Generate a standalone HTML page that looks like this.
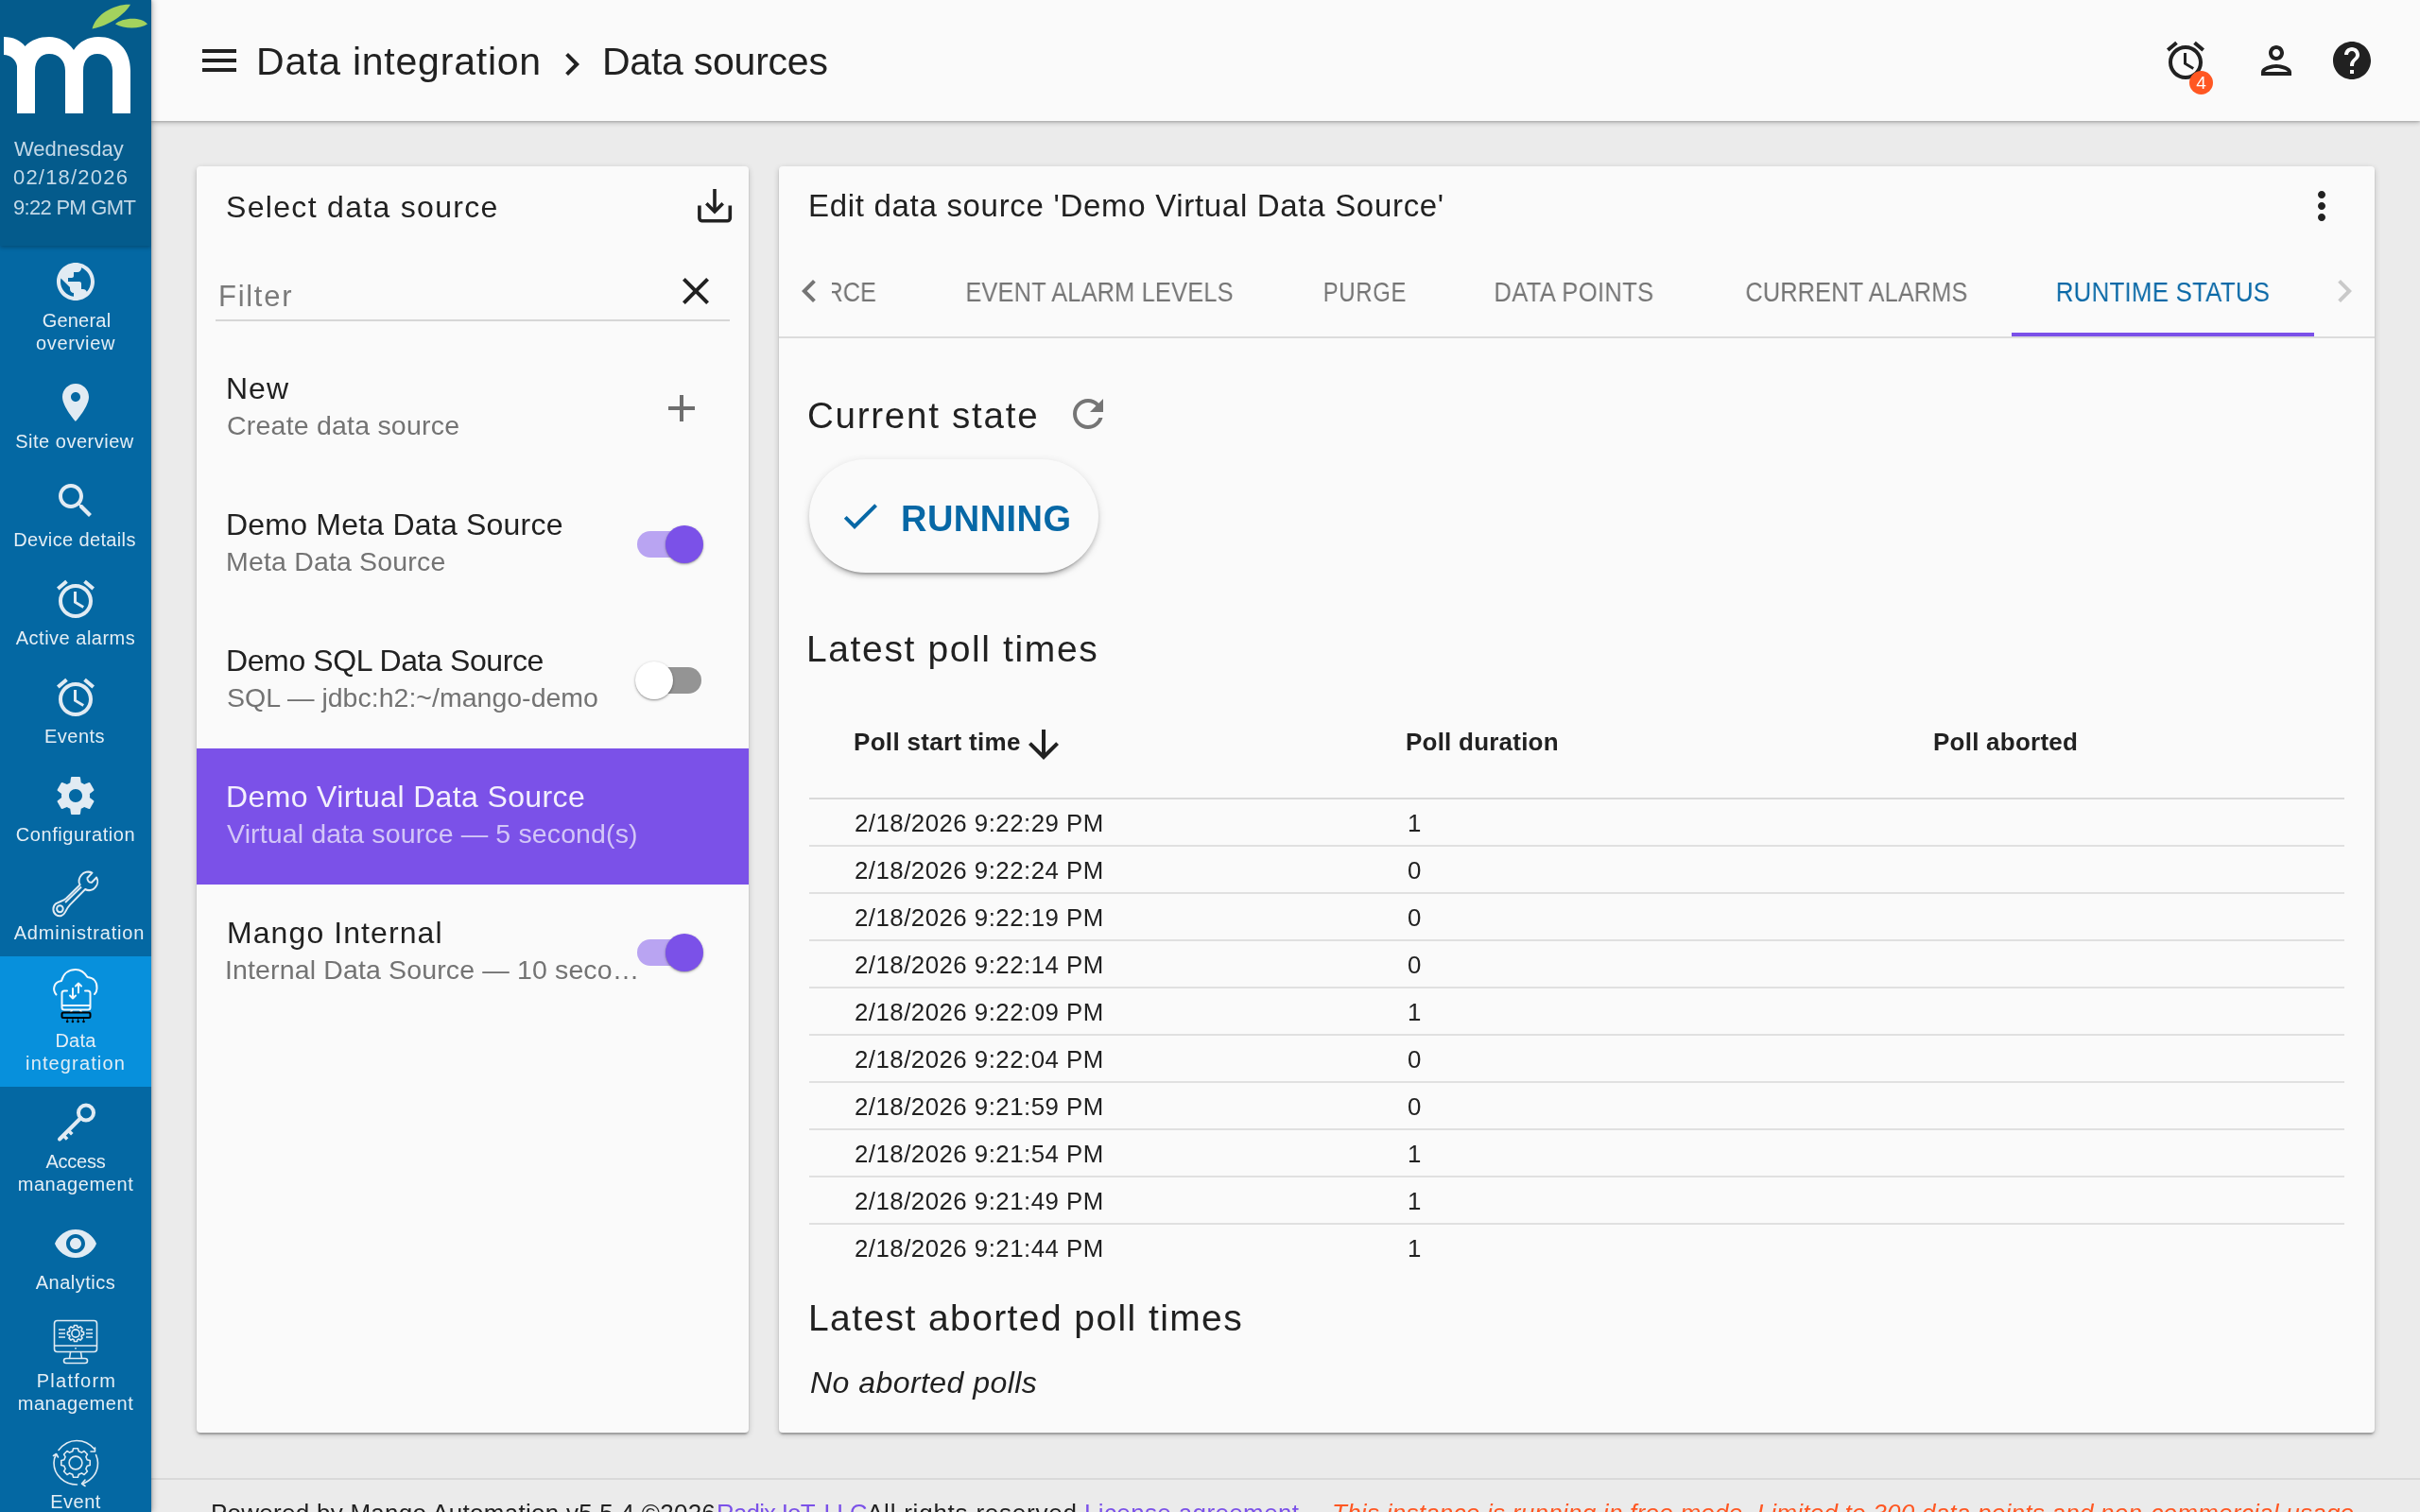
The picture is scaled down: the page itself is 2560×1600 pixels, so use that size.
<!DOCTYPE html>
<html><head><meta charset="utf-8"><title>Data sources</title>
<style>
html,body{margin:0;padding:0;}
body{width:2560px;height:1600px;overflow:hidden;position:relative;background:#ebebeb;font-family:"Liberation Sans", sans-serif;color:#212121;}
.t{position:absolute;white-space:nowrap;will-change:transform;}
.ic{position:absolute;display:block;}
.abs{position:absolute;}
</style></head><body>
<div class="abs" style="left:0;top:0;width:160px;height:1600px;background:#0468a3;box-shadow:2px 0 6px rgba(0,0,0,0.22),1px 0 2px rgba(0,0,0,0.12);z-index:5;overflow:hidden">
<div class="abs" style="left:0;top:0;width:160px;height:260px;background:#045b8c;box-shadow:0 2px 4px rgba(0,0,0,0.25);z-index:1"></div>
<svg class="ic" style="left:0;top:0;width:160px;height:130px;z-index:2" viewBox="0 0 160 130">
<path fill="#ffffff" d="M4 39 C14 39 22 43 26.5 49 C33 42 42 39 52 39 C62 39 72 44 78 53 C84 44 93 39 104 39 C124 39 138 52 138 75 L138 120 L119 120 L119 75 C119 64 112 57 103 57 C94 57 88 64 88 75 L88 120 L69 120 L69 75 C69 64 62 57 52 57 C43 57 37 64 37 75 L37 120 L18 120 L18 70 C17 63 11 58 4 58 Z"/>
<path fill="#a3d25e" d="M97.5 30.5 C101 15 121 4 138 4.7 C132 15 116 27 97.5 30.5 Z"/>
<path fill="#a3d25e" d="M122 25.4 C128 19.5 148 16.5 156 25.4 C148 30.5 132 31 122 25.4 Z"/>
</svg>
<div class="t " style="left:14.9px;top:145.38px;font-size:22px;line-height:26px;color:#c3d9e8;letter-spacing:0.002px;z-index:2;">Wednesday</div>
<div class="t " style="left:14.0px;top:175.38px;font-size:22px;line-height:26px;color:#c3d9e8;letter-spacing:1.2px;z-index:2;">02/18/2026</div>
<div class="t " style="left:14.0px;top:207.38px;font-size:22px;line-height:26px;color:#c3d9e8;letter-spacing:-0.7100000000000001px;z-index:2;">9:22 PM GMT</div>
<div class="abs" style="left:0;top:1012px;width:160px;height:138px;background:#0790dc;"></div>
<svg class="ic" style="left:56px;top:274px;width:48px;height:48px;" viewBox="0 0 24 24"><path fill="#e1ebf3" d="M12 2C6.48 2 2 6.48 2 12s4.48 10 10 10 10-4.48 10-10S17.52 2 12 2zm-1 17.93c-3.95-.49-7-3.85-7-7.93 0-.62.08-1.21.21-1.79L9 15v1c0 1.1.9 2 2 2v1.93zm6.9-2.54c-.26-.81-1-1.39-1.9-1.39h-1v-3c0-.55-.45-1-1-1H8v-2h2c.55 0 1-.45 1-1V7h2c1.1 0 2-.9 2-2v-.41c2.93 1.19 5 4.06 5 7.41 0 2.08-.8 3.97-2.1 5.39z"/></svg>
<div class="t " style="left:0.7999999999999972px;width:160px;text-align:center;top:327.07px;font-size:20px;line-height:24px;color:#e4eef5;letter-spacing:0.2px;">General</div>
<div class="t " style="left:-0.3499999999999943px;width:160px;text-align:center;top:351.07px;font-size:20px;line-height:24px;color:#e4eef5;letter-spacing:0.631px;">overview</div>
<svg class="ic" style="left:56px;top:402px;width:48px;height:48px;" viewBox="0 0 24 24"><path fill="#e1ebf3" d="M12 2C8.13 2 5 5.13 5 9c0 5.25 7 13 7 13s7-7.75 7-13c0-3.87-3.13-7-7-7zm0 9.5c-1.38 0-2.5-1.12-2.5-2.5s1.12-2.5 2.5-2.5 2.5 1.12 2.5 2.5-1.120 2.5-2.5 2.5z"/></svg>
<div class="t " style="left:-0.9000000000000057px;width:160px;text-align:center;top:455.07px;font-size:20px;line-height:24px;color:#e4eef5;letter-spacing:0.499px;">Site overview</div>
<svg class="ic" style="left:56px;top:506px;width:48px;height:48px;" viewBox="0 0 24 24"><path fill="#e1ebf3" d="M15.5 14h-.79l-.28-.27C15.41 12.59 16 11.11 16 9.5 16 5.91 13.09 3 9.5 3S3 5.91 3 9.5 5.91 16 9.5 16c1.61 0 3.09-.59 4.23-1.57l.27.28v.79l5 4.99L20.49 19l-4.99-5zm-6 0C7.01 14 5 11.99 5 9.5S7.01 5 9.5 5 14 7.01 14 9.5 11.99 14 9.5 14z"/></svg>
<div class="t " style="left:-0.9000000000000057px;width:160px;text-align:center;top:559.07px;font-size:20px;line-height:24px;color:#e4eef5;letter-spacing:0.362px;">Device details</div>
<svg class="ic" style="left:56px;top:610px;width:48px;height:48px;" viewBox="0 0 24 24"><path fill="#e1ebf3" d="M22 5.72l-4.6-3.86-1.29 1.53 4.6 3.86L22 5.72zM7.88 3.39L6.6 1.86 2 5.71l1.29 1.53 4.59-3.85zM12.5 8H11v6l4.75 2.85.75-1.23-4-2.37V8zM12 4c-4.97 0-9 4.03-9 9s4.02 9 9 9c4.97 0 9-4.03 9-9s-4.03-9-9-9zm0 16c-3.87 0-7-3.13-7-7s3.13-7 7-7 7 3.13 7 7-3.13 7-7 7z"/></svg>
<div class="t " style="left:0.0px;width:160px;text-align:center;top:663.07px;font-size:20px;line-height:24px;color:#e4eef5;letter-spacing:0.5px;">Active alarms</div>
<svg class="ic" style="left:56px;top:714px;width:48px;height:48px;" viewBox="0 0 24 24"><path fill="#e1ebf3" d="M22 5.72l-4.6-3.86-1.29 1.53 4.6 3.86L22 5.72zM7.88 3.39L6.6 1.86 2 5.71l1.29 1.53 4.59-3.85zM12.5 8H11v6l4.75 2.85.75-1.23-4-2.37V8zM12 4c-4.97 0-9 4.03-9 9s4.02 9 9 9c4.97 0 9-4.03 9-9s-4.03-9-9-9zm0 16c-3.87 0-7-3.13-7-7s3.13-7 7-7 7 3.13 7 7-3.13 7-7 7z"/></svg>
<div class="t " style="left:-0.9000000000000057px;width:160px;text-align:center;top:767.07px;font-size:20px;line-height:24px;color:#e4eef5;letter-spacing:0.5px;">Events</div>
<svg class="ic" style="left:56px;top:818px;width:48px;height:48px;" viewBox="0 0 24 24"><path fill="#e1ebf3" d="M19.43 12.98c.04-.32.07-.64.07-.98s-.03-.66-.07-.98l2.11-1.65c.19-.15.24-.42.12-.64l-2-3.46c-.12-.22-.39-.3-.61-.22l-2.49 1c-.52-.4-1.08-.73-1.69-.98l-.38-2.65C14.46 2.18 14.25 2 14 2h-4c-.25 0-.46.18-.49.42l-.38 2.65c-.61.25-1.17.59-1.69.98l-2.49-1c-.23-.09-.49 0-.61.22l-2 3.46c-.13.22-.07.49.12.64l2.11 1.65c-.04.32-.07.65-.07.98s.03.66.07.98l-2.11 1.65c-.19.15-.24.42-.12.64l2 3.46c.12.22.39.3.61.22l2.49-1c.52.4 1.08.73 1.69.98l.38 2.65c.03.24.24.42.49.42h4c.25 0 .46-.18.49-.42l.38-2.65c.61-.25 1.17-.59 1.69-.98l2.49 1c.23.09.49 0 .61-.22l2-3.46c.12-.22.07-.49-.12-.64l-2.11-1.65zM12 15.5c-1.93 0-3.5-1.57-3.5-3.5s1.57-3.5 3.5-3.5 3.5 1.57 3.5 3.5-1.57 3.5-3.5 3.5z"/></svg>
<div class="t " style="left:0.4399999999999977px;width:160px;text-align:center;top:871.07px;font-size:20px;line-height:24px;color:#e4eef5;letter-spacing:0.585px;">Configuration</div>
<div class="t " style="left:4.150000000000006px;width:160px;text-align:center;top:975.07px;font-size:20px;line-height:24px;color:#e4eef5;letter-spacing:0.852px;">Administration</div>
<div class="t " style="left:-0.45000000000000284px;width:160px;text-align:center;top:1089.07px;font-size:20px;line-height:24px;color:#e4eef5;letter-spacing:0.2px;">Data</div>
<div class="t " style="left:0.45000000000000284px;width:160px;text-align:center;top:1113.07px;font-size:20px;line-height:24px;color:#e4eef5;letter-spacing:1.13px;">integration</div>
<div class="t " style="left:0.0px;width:160px;text-align:center;top:1217.07px;font-size:20px;line-height:24px;color:#e4eef5;letter-spacing:-0.21999999999999997px;">Access</div>
<div class="t " style="left:-0.45999999999999375px;width:160px;text-align:center;top:1241.07px;font-size:20px;line-height:24px;color:#e4eef5;letter-spacing:0.6px;">management</div>
<svg class="ic" style="left:56px;top:1292px;width:48px;height:48px;" viewBox="0 0 24 24"><path fill="#e1ebf3" d="M12 4.5C7 4.5 2.73 7.61 1 12c1.73 4.39 6 7.5 11 7.5s9.27-3.11 11-7.5c-1.73-4.39-6-7.5-11-7.5zM12 17c-2.76 0-5-2.24-5-5s2.24-5 5-5 5 2.24 5 5-2.24 5-5 5zm0-8c-1.66 0-3 1.34-3 3s1.34 3 3 3 3-1.34 3-3-1.34-3-3-3z"/></svg>
<div class="t " style="left:-0.01999999999999602px;width:160px;text-align:center;top:1345.07px;font-size:20px;line-height:24px;color:#e4eef5;letter-spacing:0.501px;">Analytics</div>
<div class="t " style="left:1.0px;width:160px;text-align:center;top:1449.07px;font-size:20px;line-height:24px;color:#e4eef5;letter-spacing:1.268px;">Platform</div>
<div class="t " style="left:-0.45999999999999375px;width:160px;text-align:center;top:1473.07px;font-size:20px;line-height:24px;color:#e4eef5;letter-spacing:0.6px;">management</div>
<div class="t " style="left:0.0px;width:160px;text-align:center;top:1577.07px;font-size:20px;line-height:24px;color:#e4eef5;letter-spacing:0.5px;">Event</div>
<div class="t " style="left:0.0px;width:160px;text-align:center;top:1601.07px;font-size:20px;line-height:24px;color:#e4eef5;letter-spacing:0.5px;">handlers</div>
<svg class="ic" style="left:40px;top:910px;width:80px;height:80px" viewBox="0 0 80 80"><g fill="none" stroke="#e1ebf3" stroke-width="2.1" stroke-linejoin="round" transform="translate(1.87,0.6) scale(0.92,0.965)">
<path d="M30.5 41.5 C27 44.5 22 45 18.5 47.5 C14.5 50.5 15 57 19 59.5 C23 62 27.5 60.5 29.5 56.5 C31 53.5 32 51.5 35 48.5 L52.5 31.5 C56 33.5 61 33 64 29.5 C67 26.5 67.5 22 65.5 18.5 L60 24 C57 24.5 54.5 22 55 19 L60.5 13.5 C56.5 11.5 51 12.5 48 16 C45 19.5 44.5 23.5 46.5 26.5 Z"/>
<circle cx="23.4" cy="53" r="3.6"/>
<path d="M29.5 46 L48 29"/></g></svg>
<svg class="ic" style="left:40px;top:1015px;width:80px;height:80px" viewBox="0 0 80 80"><g fill="none" stroke="#f2f8fc" stroke-width="2" stroke-linecap="round" stroke-linejoin="round">
<path d="M19.5 37.5 C15 32 17 24 25 23 C27 15 33 11 40 11 C46 11 50 15 52.5 19 C59 19.5 63 24 62.5 31 C62.5 33.5 61.5 35.5 60 37"/>
<path d="M31 33.5 H28 C26.5 33.5 25.5 34.5 25.5 36 V51 C25.5 52.5 26.5 53.5 28 53.5 H53 C54.5 53.5 55.5 52.5 55.5 51 V36 C55.5 34.5 54.5 33.5 53 33.5 H50"/>
<path d="M26 49 H55"/>
<path d="M37 31 V41.5 M34 38.5 L37 41.5 L40 38.5"/>
<path d="M43 35.5 V25.5 M40 28.5 L43 25.5 L46 28.5"/>
<path d="M36 54 L35 56 M45 54 L46 56"/>
</g>
<rect x="25.5" y="56.5" width="30" height="5.5" rx="1.5" fill="none" stroke="#000" stroke-width="2"/>
<g fill="#000"><circle cx="31.2" cy="66" r="1.3"/><circle cx="36.9" cy="66" r="1.3"/><circle cx="42.6" cy="66" r="1.3"/><circle cx="48.5" cy="66" r="1.3"/></g>
<path d="M31.2 62 V66 M36.9 62 V66 M42.6 62 V66 M48.5 62 V66" stroke="#000" stroke-width="0.8"/>
</svg>
<svg class="ic" style="left:40px;top:1160px;width:80px;height:80px" viewBox="0 0 80 80"><g fill="none" stroke="#e1ebf3" stroke-linecap="round">
<circle cx="51" cy="17.5" r="8" stroke-width="4"/>
<path d="M45.5 23 L23 45.5" stroke-width="4"/>
<path d="M32 36 L36.3 40.3 M26.8 41.3 L31.1 45.6" stroke-width="3.6" stroke-linecap="butt"/>
</g></svg>
<svg class="ic" style="left:40px;top:1390px;width:80px;height:60px" viewBox="0 0 80 60"><g fill="none" stroke="#e1ebf3" stroke-width="1.6" stroke-linejoin="round">
<rect x="17.5" y="7.5" width="45" height="33" rx="3"/>
<path d="M17.5 34 H62.5"/>
<path d="M34.5 41 L33.5 47.5 M45.5 41 L46.5 47.5"/>
<rect x="27.5" y="47.5" width="25" height="5" rx="2.5"/>
<circle cx="40" cy="21" r="4.1"/>
<path d="M38.10 14.37 L38.49 12.43 L41.51 12.43 L41.90 14.37 L43.35 14.97 L44.99 13.87 L47.13 16.01 L46.03 17.65 L46.63 19.10 L48.57 19.49 L48.57 22.51 L46.63 22.90 L46.03 24.35 L47.13 25.99 L44.99 28.13 L43.35 27.03 L41.90 27.63 L41.51 29.57 L38.49 29.57 L38.10 27.63 L36.65 27.03 L35.01 28.13 L32.87 25.99 L33.97 24.35 L33.37 22.90 L31.43 22.51 L31.43 19.49 L33.37 19.10 L33.97 17.65 L32.87 16.01 L35.01 13.87 L36.65 14.97 Z"/>
</g>
<g stroke="#e1ebf3" stroke-width="1.6"><path d="M22 17 H29 M22 21 H29 M22 25 H29 M51 17 H58 M51 21 H58 M51 25 H58"/></g>
<rect x="39.2" y="36" width="1.6" height="1.6" fill="#e1ebf3"/>
</svg>
<svg class="ic" style="left:40px;top:1515px;width:80px;height:65px" viewBox="0 0 80 65"><g fill="none" stroke="#e1ebf3" stroke-width="1.6" stroke-linecap="round" stroke-linejoin="round">
<path d="M22 19.5 C28 12 36 9.5 41 9.5 C48 9.5 55 12.5 60 18.5"/>
<path d="M56 21 H60.5 V17"/>
<path d="M61.5 24.5 C63 28 63.5 31 63.5 33 C63.5 44 57 51 48 55"/>
<path d="M50 51 L46.5 55 L50 57.5"/>
<path d="M41.5 56 C28 56 17 46 17 33 C17 29.5 18 26.5 19.5 24"/>
<path d="M16.5 25.5 L19.5 23.5 L21.5 27"/>
<path d="M36.74 20.83 L37.59 17.79 L42.41 17.79 L43.26 20.83 L46.30 22.09 L49.05 20.54 L52.46 23.95 L50.91 26.70 L52.17 29.74 L55.21 30.59 L55.21 35.41 L52.17 36.26 L50.91 39.30 L52.46 42.05 L49.05 45.46 L46.30 43.91 L43.26 45.17 L42.41 48.21 L37.59 48.21 L36.74 45.17 L33.70 43.91 L30.95 45.46 L27.54 42.05 L29.09 39.30 L27.83 36.26 L24.79 35.41 L24.79 30.59 L27.83 29.74 L29.09 26.70 L27.54 23.95 L30.95 20.54 L33.70 22.09 Z"/>
<circle cx="40" cy="33" r="6.9"/>
</g></svg>
</div>
<div class="abs" style="left:160px;top:0;width:2400px;height:128px;background:#fafafa;box-shadow:0 2px 5px rgba(0,0,0,0.22),0 1px 2px rgba(0,0,0,0.12);z-index:3"></div>
<div class="abs" style="left:0;top:0;width:2560px;height:128px;z-index:4">
<svg class="ic" style="left:208px;top:40px;width:48px;height:48px;" viewBox="0 0 24 24"><path fill="#212121" d="M3 18h18v-2H3v2zm0-5h18v-2H3v2zm0-7v2h18V6H3z"/></svg>
<div class="t " style="left:271.0px;top:41.49px;font-size:41px;line-height:49px;color:#212121;letter-spacing:0.78px;">Data integration</div>
<svg class="ic" style="left:581px;top:44px;width:48px;height:48px;" viewBox="0 0 24 24"><path fill="#212121" d="M10 6L8.59 7.41 13.17 12l-4.58 4.59L10 18l6-6z"/></svg>
<div class="t " style="left:637.0px;top:41.49px;font-size:41px;line-height:49px;color:#212121;letter-spacing:-0.241px;">Data sources</div>
<svg class="ic" style="left:2288px;top:40px;width:48px;height:48px;" viewBox="0 0 24 24"><path fill="#212121" d="M22 5.72l-4.6-3.86-1.29 1.53 4.6 3.86L22 5.72zM7.88 3.39L6.6 1.86 2 5.71l1.29 1.53 4.59-3.85zM12.5 8H11v6l4.75 2.85.75-1.23-4-2.37V8zM12 4c-4.97 0-9 4.03-9 9s4.02 9 9 9c4.97 0 9-4.03 9-9s-4.03-9-9-9zm0 16c-3.87 0-7-3.13-7-7s3.13-7 7-7 7 3.13 7 7-3.13 7-7 7z"/></svg>
<div class="abs" style="left:2315.5px;top:74.5px;width:25px;height:25px;border-radius:50%;background:#ff5722;"></div>
<div class="t " style="left:2315.5px;width:25px;text-align:center;top:76.42px;font-size:19px;line-height:23px;color:#ffffff;">4</div>
<svg class="ic" style="left:2384px;top:40px;width:48px;height:48px;" viewBox="0 0 24 24"><path fill="#212121" d="M12 6c1.1 0 2 .9 2 2s-.9 2-2 2-2-.9-2-2 .9-2 2-2m0 10c2.7 0 5.8 1.29 6 2H6c.23-.72 3.31-2 6-2m0-12C9.79 4 8 5.79 8 8s1.79 4 4 4 4-1.79 4-4-1.79-4-4-4zm0 10c-2.67 0-8 1.34-8 4v2h16v-2c0-2.66-5.33-4-8-4z"/></svg>
<svg class="ic" style="left:2464px;top:40px;width:48px;height:48px;" viewBox="0 0 24 24"><path fill="#212121" d="M12 2C6.48 2 2 6.48 2 12s4.48 10 10 10 10-4.48 10-10S17.52 2 12 2zm1 17h-2v-2h2v2zm2.07-7.75l-.9.92C13.45 12.9 13 13.5 13 15h-2v-.5c0-1.1.45-2.1 1.17-2.83l1.24-1.26c.37-.36.59-.86.59-1.41 0-1.1-.9-2-2-2s-2 .9-2 2H8c0-2.210 1.79-4 4-4s4 1.79 4 4c0 .88-.36 1.68-.93 2.25z"/></svg>
</div>
<div class="abs" style="left:208px;top:176px;width:584px;height:1340px;background:#fafafa;border-radius:4px;box-shadow:0 2px 6px rgba(0,0,0,0.2),0 2px 2px rgba(0,0,0,0.14),0 4px 2px -2px rgba(0,0,0,0.12);"></div>
<div class="abs" style="left:824px;top:176px;width:1688px;height:1340px;background:#fafafa;border-radius:4px;box-shadow:0 2px 6px rgba(0,0,0,0.2),0 2px 2px rgba(0,0,0,0.14),0 4px 2px -2px rgba(0,0,0,0.12);"></div>
<div class="t " style="left:239.2px;top:199.61px;font-size:32px;line-height:38px;color:#212121;letter-spacing:1.316px;">Select data source</div>
<svg class="ic" style="left:732px;top:194px;width:48px;height:48px" viewBox="0 0 48 48"><g fill="none" stroke="#212121" stroke-width="3.6"><path d="M24 6 V30"/><path d="M15.3 21.3 L24 30 L32.7 21.3"/><path d="M7.9 23.6 V36.8 a3 3 0 0 0 3 3 H37.3 a3 3 0 0 0 3 -3 V23.6"/></g></svg>
<div class="t " style="left:231.0px;top:294.76px;font-size:31px;line-height:37px;color:#7a7a7a;letter-spacing:1.72px;">Filter</div>
<svg class="ic" style="left:711.5px;top:283.5px;width:48px;height:48px;" viewBox="0 0 24 24"><path fill="#212121" d="M19 6.41L17.59 5 12 10.59 6.41 5 5 6.41 10.59 12 5 17.59 6.41 19 12 13.41 17.59 19 19 17.59 13.41 12z"/></svg>
<div class="abs" style="left:228px;top:338px;width:544px;height:2px;background:#d6d6d6;"></div>
<div class="abs" style="left:208px;top:792px;width:584px;height:144px;background:#7b51e8;"></div>
<div class="t " style="left:239.0px;top:392.21px;font-size:32px;line-height:38px;color:#212121;letter-spacing:1.0px;">New</div>
<div class="t " style="left:239.9px;top:432.62px;font-size:28.5px;line-height:34px;color:#737373;letter-spacing:0.21300000000000002px;">Create data source</div>
<svg class="ic" style="left:696.5px;top:408px;width:48px;height:48px;" viewBox="0 0 24 24"><path fill="#6e6e6e" d="M19 13h-6v6h-2v-6H5v-2h6V5h2v6h6v2z"/></svg>
<div class="t " style="left:239.36px;top:536.21px;font-size:32px;line-height:38px;color:#212121;letter-spacing:0.21600000000000003px;">Demo Meta Data Source</div>
<div class="t " style="left:239.0px;top:576.62px;font-size:28.5px;line-height:34px;color:#737373;letter-spacing:0.16999999999999998px;">Meta Data Source</div>
<div class="abs" style="left:674px;top:562px;width:68px;height:28px;border-radius:14px;background:#b9a4f2;"></div>
<div class="abs" style="left:704px;top:556px;width:40px;height:40px;border-radius:50%;background:#7b51e8;box-shadow:0 1px 3px rgba(0,0,0,0.3),0 1px 1px rgba(0,0,0,0.14);"></div>
<div class="t " style="left:239.36px;top:680.21px;font-size:32px;line-height:38px;color:#212121;letter-spacing:-0.393px;">Demo SQL Data Source</div>
<div class="t " style="left:239.9px;top:720.62px;font-size:28.5px;line-height:34px;color:#737373;letter-spacing:0.014000000000000005px;">SQL — jdbc:h2:~/mango-demo</div>
<div class="abs" style="left:674px;top:706px;width:68px;height:28px;border-radius:14px;background:#949494;"></div>
<div class="abs" style="left:672px;top:700px;width:40px;height:40px;border-radius:50%;background:#ffffff;box-shadow:0 1px 3px rgba(0,0,0,0.35),0 1px 1px rgba(0,0,0,0.14);"></div>
<div class="t " style="left:239.36px;top:824.21px;font-size:32px;line-height:38px;color:#f3effd;letter-spacing:0.374px;">Demo Virtual Data Source</div>
<div class="t " style="left:239.9px;top:864.62px;font-size:28.5px;line-height:34px;color:#d3c6f7;letter-spacing:0.132px;">Virtual data source — 5 second(s)</div>
<div class="t " style="left:240.26px;top:968.21px;font-size:32px;line-height:38px;color:#212121;letter-spacing:1.083px;">Mango Internal</div>
<div class="t " style="left:238.1px;top:1008.62px;font-size:28.5px;line-height:34px;color:#737373;letter-spacing:0.14px;">Internal Data Source — 10 seco…</div>
<div class="abs" style="left:674px;top:994px;width:68px;height:28px;border-radius:14px;background:#b9a4f2;"></div>
<div class="abs" style="left:704px;top:988px;width:40px;height:40px;border-radius:50%;background:#7b51e8;box-shadow:0 1px 3px rgba(0,0,0,0.3),0 1px 1px rgba(0,0,0,0.14);"></div>
<div class="t " style="left:854.5px;top:198.37px;font-size:33px;line-height:40px;color:#212121;letter-spacing:0.6950000000000001px;">Edit data source 'Demo Virtual Data Source'</div>
<svg class="ic" style="left:2432px;top:194px;width:48px;height:48px;" viewBox="0 0 24 24"><path fill="#212121" d="M12 8c1.1 0 2-.9 2-2s-.9-2-2-2-2 .9-2 2 .9 2 2 2zm0 2c-1.1 0-2 .9-2 2s.9 2 2 2 2-.9 2-2-.9-2-2-2zm0 6c-1.1 0-2 .9-2 2s.9 2 2 2 2-.9 2-2-.9-2-2-2z"/></svg>
<div class="abs" style="left:824px;top:356px;width:1688px;height:2px;background:#dcdcdc;"></div>
<svg class="ic" style="left:832px;top:284px;width:48px;height:48px;" viewBox="0 0 24 24"><path fill="#757575" d="M15.41 7.41L14 6l-6 6 6 6 1.41-1.41L10.83 12z"/></svg>
<svg class="ic" style="left:2456px;top:283.5px;width:48px;height:48px;" viewBox="0 0 24 24"><path fill="#c9c9c9" d="M10 6L8.59 7.41 13.17 12l-4.58 4.59L10 18l6-6z"/></svg>
<div class="abs" style="left:880px;top:240px;width:1576px;height:116px;overflow:hidden;">
<div class="t " style="left:-253px;width:300px;text-align:right;top:51.28px;font-size:29.5px;line-height:35px;color:#757575;transform:scaleX(0.8600);transform-origin:right;">DATA SOURCE</div>
<div class="t " style="left:-16.580000000000098px;width:600px;text-align:center;top:51.28px;font-size:29.5px;line-height:35px;color:#757575;letter-spacing:0.212px;transform:scaleX(0.8597);transform-origin:center;">EVENT ALARM LEVELS</div>
<div class="t " style="left:263.5px;width:600px;text-align:center;top:51.28px;font-size:29.5px;line-height:35px;color:#757575;letter-spacing:0.9px;transform:scaleX(0.8094);transform-origin:center;">PURGE</div>
<div class="t " style="left:485.2199999999999px;width:600px;text-align:center;top:51.28px;font-size:29.5px;line-height:35px;color:#757575;letter-spacing:0.378px;transform:scaleX(0.8679);transform-origin:center;">DATA POINTS</div>
<div class="t " style="left:783.56px;width:600px;text-align:center;top:51.28px;font-size:29.5px;line-height:35px;color:#757575;letter-spacing:0.211px;transform:scaleX(0.8565);transform-origin:center;">CURRENT ALARMS</div>
<div class="t " style="left:1107.6px;width:600px;text-align:center;top:51.28px;font-size:29.5px;line-height:35px;color:#0a69a7;letter-spacing:0.277px;transform:scaleX(0.8759);transform-origin:center;">RUNTIME STATUS</div>
</div>
<div class="abs" style="left:2128px;top:352px;width:320px;height:4px;background:#7b51e8;"></div>
<div class="t " style="left:854.0px;top:417.46px;font-size:38.5px;line-height:46px;color:#212121;letter-spacing:1.75px;">Current state</div>
<svg class="ic" style="left:1126.5px;top:414px;width:48px;height:48px;" viewBox="0 0 24 24"><path fill="#757575" d="M17.65 6.35C16.2 4.9 14.21 4 12 4c-4.42 0-7.99 3.580-7.99 8s3.57 8 7.99 8c3.73 0 6.84-2.55 7.73-6h-2.08c-.82 2.33-3.04 4-5.65 4-3.31 0-6-2.69-6-6s2.69-6 6-6c1.66 0 3.14.69 4.22 1.78L13 11h7V4l-2.35 2.35z"/></svg>
<div class="abs" style="left:856px;top:486px;width:306px;height:120px;border-radius:60px;background:#fafafa;box-shadow:0 6px 2px -4px rgba(0,0,0,0.2),0 4px 4px 0 rgba(0,0,0,0.14),0 2px 10px 0 rgba(0,0,0,0.12);"></div>
<svg class="ic" style="left:886px;top:522px;width:48px;height:48px;" viewBox="0 0 24 24"><path fill="#0768a6" d="M9 16.17L4.83 12l-1.42 1.41L9 19 21 7l-1.41-1.41z"/></svg>
<div class="t " style="left:953.2px;top:526.33px;font-size:38px;line-height:46px;color:#0768a6;font-weight:bold;letter-spacing:0.45px;">RUNNING</div>
<div class="t " style="left:853.0px;top:662.99px;font-size:39px;line-height:47px;color:#212121;letter-spacing:1.619px;">Latest poll times</div>
<div class="t " style="left:903.2px;top:770.49px;font-size:26px;line-height:31px;color:#212121;font-weight:bold;letter-spacing:0.321px;">Poll start time</div>
<svg class="ic" style="left:1080px;top:764px;width:48px;height:48px;" viewBox="0 0 24 24"><path fill="#212121" d="M20 12l-1.41-1.41L13 16.17V4h-2v12.17l-5.58-5.59L4 12l8 8 8-8z"/></svg>
<div class="t " style="left:1487.2px;top:770.49px;font-size:26px;line-height:31px;color:#212121;font-weight:bold;letter-spacing:0.225px;">Poll duration</div>
<div class="t " style="left:2045.3px;top:770.49px;font-size:26px;line-height:31px;color:#212121;font-weight:bold;letter-spacing:0.242px;">Poll aborted</div>
<div class="abs" style="left:856px;top:844px;width:1624px;height:2px;background:#d9d9d9;"></div>
<div class="t " style="left:904.0px;top:855.56px;font-size:25.8px;line-height:31px;color:#212121;letter-spacing:0.493px;">2/18/2026 9:22:29 PM</div>
<div class="t " style="left:1489px;top:855.56px;font-size:25.8px;line-height:31px;color:#212121;">1</div>
<div class="abs" style="left:856px;top:894px;width:1624px;height:2px;background:#e0e0e0;"></div>
<div class="t " style="left:904.0px;top:905.56px;font-size:25.8px;line-height:31px;color:#212121;letter-spacing:0.493px;">2/18/2026 9:22:24 PM</div>
<div class="t " style="left:1489px;top:905.56px;font-size:25.8px;line-height:31px;color:#212121;">0</div>
<div class="abs" style="left:856px;top:944px;width:1624px;height:2px;background:#e0e0e0;"></div>
<div class="t " style="left:904.0px;top:955.56px;font-size:25.8px;line-height:31px;color:#212121;letter-spacing:0.493px;">2/18/2026 9:22:19 PM</div>
<div class="t " style="left:1489px;top:955.56px;font-size:25.8px;line-height:31px;color:#212121;">0</div>
<div class="abs" style="left:856px;top:994px;width:1624px;height:2px;background:#e0e0e0;"></div>
<div class="t " style="left:904.0px;top:1005.56px;font-size:25.8px;line-height:31px;color:#212121;letter-spacing:0.493px;">2/18/2026 9:22:14 PM</div>
<div class="t " style="left:1489px;top:1005.56px;font-size:25.8px;line-height:31px;color:#212121;">0</div>
<div class="abs" style="left:856px;top:1044px;width:1624px;height:2px;background:#e0e0e0;"></div>
<div class="t " style="left:904.0px;top:1055.56px;font-size:25.8px;line-height:31px;color:#212121;letter-spacing:0.493px;">2/18/2026 9:22:09 PM</div>
<div class="t " style="left:1489px;top:1055.56px;font-size:25.8px;line-height:31px;color:#212121;">1</div>
<div class="abs" style="left:856px;top:1094px;width:1624px;height:2px;background:#e0e0e0;"></div>
<div class="t " style="left:904.0px;top:1105.56px;font-size:25.8px;line-height:31px;color:#212121;letter-spacing:0.493px;">2/18/2026 9:22:04 PM</div>
<div class="t " style="left:1489px;top:1105.56px;font-size:25.8px;line-height:31px;color:#212121;">0</div>
<div class="abs" style="left:856px;top:1144px;width:1624px;height:2px;background:#e0e0e0;"></div>
<div class="t " style="left:904.0px;top:1155.56px;font-size:25.8px;line-height:31px;color:#212121;letter-spacing:0.493px;">2/18/2026 9:21:59 PM</div>
<div class="t " style="left:1489px;top:1155.56px;font-size:25.8px;line-height:31px;color:#212121;">0</div>
<div class="abs" style="left:856px;top:1194px;width:1624px;height:2px;background:#e0e0e0;"></div>
<div class="t " style="left:904.0px;top:1205.56px;font-size:25.8px;line-height:31px;color:#212121;letter-spacing:0.493px;">2/18/2026 9:21:54 PM</div>
<div class="t " style="left:1489px;top:1205.56px;font-size:25.8px;line-height:31px;color:#212121;">1</div>
<div class="abs" style="left:856px;top:1244px;width:1624px;height:2px;background:#e0e0e0;"></div>
<div class="t " style="left:904.0px;top:1255.56px;font-size:25.8px;line-height:31px;color:#212121;letter-spacing:0.493px;">2/18/2026 9:21:49 PM</div>
<div class="t " style="left:1489px;top:1255.56px;font-size:25.8px;line-height:31px;color:#212121;">1</div>
<div class="abs" style="left:856px;top:1294px;width:1624px;height:2px;background:#e0e0e0;"></div>
<div class="t " style="left:904.0px;top:1305.56px;font-size:25.8px;line-height:31px;color:#212121;letter-spacing:0.493px;">2/18/2026 9:21:44 PM</div>
<div class="t " style="left:1489px;top:1305.56px;font-size:25.8px;line-height:31px;color:#212121;">1</div>
<div class="t " style="left:855.0px;top:1370.99px;font-size:39px;line-height:47px;color:#212121;letter-spacing:1.4080000000000001px;">Latest aborted poll times</div>
<div class="t " style="left:856.9px;top:1443.91px;font-size:32px;line-height:38px;color:#212121;font-style:italic;letter-spacing:0.45px;">No aborted polls</div>
<div class="abs" style="left:160px;top:1564px;width:2400px;height:2px;background:#d9d9d9;"></div>
<div class="t " style="left:223.2px;top:1586.49px;font-size:26px;line-height:31px;color:#212121;letter-spacing:0.262px;">Powered by Mango Automation v5.5.4 ©2026</div>
<div class="t " style="left:758.2px;top:1586.49px;font-size:26px;line-height:31px;color:#7b51e8;letter-spacing:-0.8380000000000001px;text-decoration:underline;">Radix IoT, LLC</div>
<div class="t " style="left:916.5px;top:1586.49px;font-size:26px;line-height:31px;color:#212121;letter-spacing:0.7689999999999999px;">All rights reserved.</div>
<div class="t " style="left:1147.2px;top:1586.49px;font-size:26px;line-height:31px;color:#7b51e8;letter-spacing:0.368px;text-decoration:underline;">License agreement</div>
<div class="t " style="left:1380px;top:1586.49px;font-size:26px;line-height:31px;color:#212121;">—</div>
<div class="t " style="left:1409.2px;top:1586.49px;font-size:26px;line-height:31px;color:#ff5722;font-style:italic;letter-spacing:0.26px;">This instance is running in free mode. Limited to 300 data points and non-commercial usage.</div>
</body></html>
